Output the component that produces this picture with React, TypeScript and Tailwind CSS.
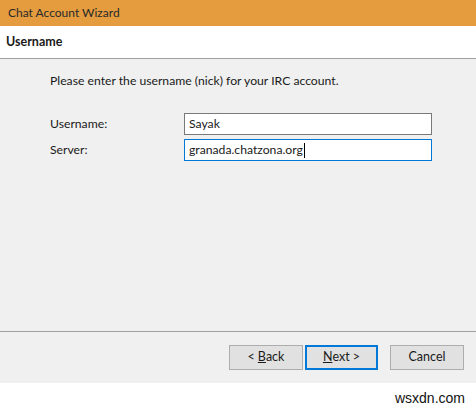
import React from "react";

export default function App() {
  return (
    <div
      className="w-[476px] h-[409px] flex flex-col bg-white text-[12px] text-[#1a1a1a] overflow-hidden"
      style={{ fontFamily: 'Lato, "Noto Sans", sans-serif' }}
    >
      <div className="h-[26px] bg-[#e49c3f] flex items-center pl-[8px] text-[12px] text-[#2a2a2a]">
        Chat Account Wizard
      </div>
      <div className="h-[34px] bg-white flex items-center pl-[6px] font-bold text-[12.5px] border-b border-[#a0a0a0]">
        Username
      </div>
      <div className="h-[275px] bg-[#f0f0f0] flex flex-col pl-[50px] pt-[13px] border-b border-[#a0a0a0]">
        <div className="h-[18px] flex items-center text-[12.2px]">Please enter the username (nick) for your IRC account.</div>
        <div className="mt-[23px] flex items-center h-[22px] text-[12.2px]">
          <span className="w-[134px]">Username:</span>
          <div className="w-[248px] h-[22px] bg-white border border-[#7a7a7a] flex items-center pl-[4px]">Sayak</div>
        </div>
        <div className="mt-[4px] flex items-center h-[22px] text-[12.2px]">
          <span className="w-[134px]">Server:</span>
          <div className="w-[248px] h-[22px] bg-white border border-[#0078d7] flex items-center pl-[4px]">
            granada.chatzona.org<span className="inline-block w-[1px] h-[15px] bg-black ml-[1px]" />
          </div>
        </div>
      </div>
      <div className="h-[52px] bg-[#f0f0f0] flex items-center pl-[229px] text-[12.5px]">
        <button className="w-[74px] h-[25px] bg-[#e1e1e1] border border-[#adadad] flex items-center justify-center">
          &lt; <span className="underline ml-[3px]">B</span>ack
        </button>
        <button className="ml-[2px] w-[73px] h-[25px] bg-[#e1e1e1] border-2 border-[#0078d7] flex items-center justify-center">
          <span className="underline">N</span>ext &gt;
        </button>
        <button className="ml-[12px] w-[74px] h-[25px] bg-[#e1e1e1] border border-[#adadad] flex items-center justify-center">
          Cancel
        </button>
      </div>
      <div className="flex-1 bg-white flex justify-end items-start pr-[11px] pt-[5px] text-[14px] text-[#111]" style={{ fontFamily: '"Liberation Sans", sans-serif' }}>
        wsxdn.com
      </div>
    </div>
  );
}
